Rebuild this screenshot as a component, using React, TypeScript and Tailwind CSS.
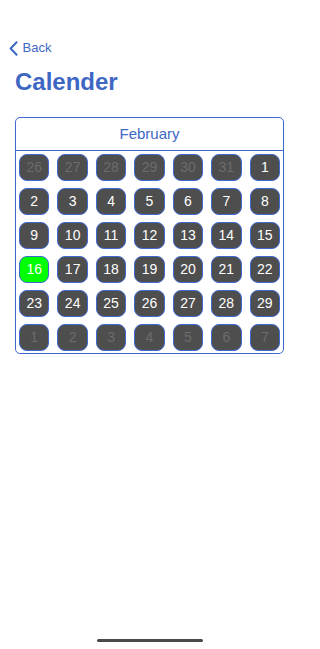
type Day = { n: number; dim?: boolean; today?: boolean };

const buildDays = (): Day[] => {
  const days: Day[] = [];
  // tail of january
  for (let n = 26; n <= 31; n++) days.push({ n, dim: true });
  for (let n = 1; n <= 29; n++) days.push({ n, today: n === 16 });
  // head of march
  for (let n = 1; n <= 7; n++) days.push({ n, dim: true });
  return days;
};

const DayCell = ({ day }: { day: Day }) => {
  let tone = "bg-[#4e4e4e] text-white";
  if (day.dim) tone = "bg-[#4e4e4e] text-[#6c6c6c]";
  if (day.today) tone = "bg-[#00ff00] text-white";
  return (
    <div
      className={`h-[27px] rounded-lg border-[1.5px] border-[#4069d4] flex items-center justify-center text-[14px] ${tone}`}
    >
      {day.n}
    </div>
  );
};

export default function App() {
  const days = buildDays();

  return (
    <div className="h-[649px] w-[300px] bg-white flex flex-col font-['Liberation_Sans',Arial,sans-serif] overflow-hidden">
      {/* Nav */}
      <div className="mt-[38px] h-[20px] flex items-center pl-[9px] text-[#3e67c4]">
        <svg width="9" height="15" viewBox="0 0 9 15" fill="none" className="mt-[1px]">
          <path
            d="M7.6 1.2 1.6 7.5l6 6.3"
            stroke="currentColor"
            strokeWidth="2"
            strokeLinecap="round"
            strokeLinejoin="round"
          />
        </svg>
        <span className="ml-[4.5px] text-[13px] leading-[20px]">Back</span>
      </div>

      <div className="px-[15px]">
        <h1 className="mt-[9.5px] text-[24px] leading-[28px] font-bold text-[#3e67c4]">
          Calender
        </h1>

        {/* Calendar */}
        <div className="mt-[21.5px] mr-[1px] border border-[#3f68d0] rounded-[5px] overflow-hidden">
          <div className="h-[33px] border-b border-[#3f68d0] flex items-center justify-center text-[15px] text-[#3e67c4]">
            February
          </div>
          <div className="grid grid-cols-7 gap-x-[8px] gap-y-[7px] px-[3px] pt-[3px] pb-[2px]">
            {days.map((d, i) => (
              <DayCell key={i} day={d} />
            ))}
          </div>
        </div>
      </div>

      {/* Home indicator */}
      <div className="mt-auto mb-[7px] flex justify-center">
        <div className="w-[106px] h-[3px] rounded-full bg-[#4a4a4a]" />
      </div>
    </div>
  );
}
